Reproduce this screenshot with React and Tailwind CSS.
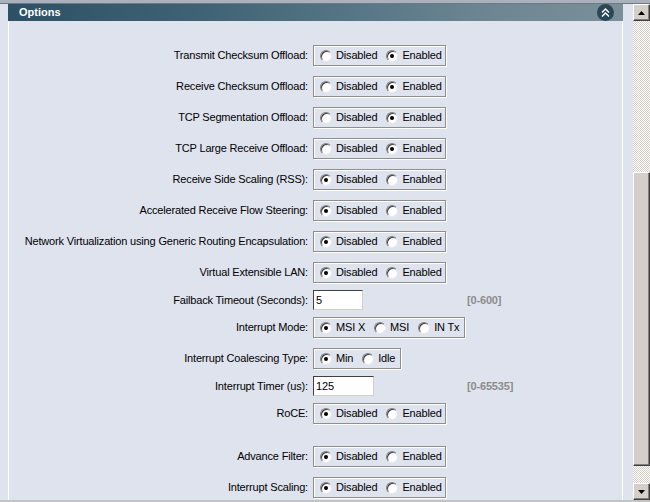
import React from "react";

const font = { fontFamily: '"Liberation Sans", Arial, sans-serif' };

const Radio = ({ checked }) => (
  <span className="relative inline-block w-[12px] h-[12px] rounded-full bg-white border border-t-[#808080] border-l-[#808080] border-b-[#e8e8e8] border-r-[#e8e8e8] shadow-[inset_1px_1px_0_#404040]">
    {checked && (
      <span className="absolute left-[3px] top-[3px] w-[4px] h-[4px] rounded-full bg-black" />
    )}
  </span>
);

const RadioBox = ({ options, value, width = "min-w-[132px]" }) => (
  <div
    className={`${width} h-[21px] flex items-center gap-[9px] pl-[6px] pr-[3px] border border-[#8e8e8e] shadow-[inset_1px_1px_0_#fff,1px_1px_0_#fff]`}
  >
    {options.map((o) => (
      <label key={o} className="flex items-center gap-[4px] whitespace-nowrap">
        <Radio checked={o === value} />
        <span>{o}</span>
      </label>
    ))}
  </div>
);

const TextBox = ({ value, width }) => (
  <div
    className={`${width} h-[20px] bg-white border border-t-[#404040] border-l-[#404040] border-b-[#d4d0c8] border-r-[#d4d0c8] flex items-center pl-[2px]`}
  >
    {value}
  </div>
);

const ED = ["Disabled", "Enabled"];

const rows = [
  { label: "Transmit Checksum Offload:", type: "radio", value: "Enabled" },
  { label: "Receive Checksum Offload:", type: "radio", value: "Enabled" },
  { label: "TCP Segmentation Offload:", type: "radio", value: "Enabled" },
  { label: "TCP Large Receive Offload:", type: "radio", value: "Enabled" },
  { label: "Receive Side Scaling (RSS):", type: "radio", value: "Disabled" },
  { label: "Accelerated Receive Flow Steering:", type: "radio", value: "Disabled" },
  {
    label: "Network Virtualization using Generic Routing Encapsulation:",
    type: "radio",
    value: "Disabled",
  },
  { label: "Virtual Extensible LAN:", type: "radio", value: "Disabled" },
  { label: "Failback Timeout (Seconds):", type: "text", value: "5", width: "w-[50px]", hint: "[0-600]" },
  {
    label: "Interrupt Mode:",
    type: "radio",
    options: ["MSI X", "MSI", "IN Tx"],
    value: "MSI X",
    width: "min-w-[152px]",
  },
  {
    label: "Interrupt Coalescing Type:",
    type: "radio",
    options: ["Min", "Idle"],
    value: "Min",
    width: "min-w-[88px]",
  },
  { label: "Interrupt Timer (us):", type: "text", value: "125", width: "w-[61px]", hint: "[0-65535]" },
  { label: "RoCE:", type: "radio", value: "Disabled" },
  { spacer: true },
  { label: "Advance Filter:", type: "radio", value: "Disabled" },
  { label: "Interrupt Scaling:", type: "radio", value: "Disabled" },
];

const CollapseIcon = () => (
  <svg width="17" height="17" viewBox="0 0 17 17">
    <circle cx="8.5" cy="8.5" r="8.5" fill="#2b4756" />
    <path d="M5 8.5 L8.5 5 L12 8.5 M5 12.5 L8.5 9 L12 12.5" stroke="#fff" strokeWidth="1.4" fill="none" />
  </svg>
);

const ScrollButton = ({ down }) => (
  <div className="h-[17px] w-[17px] bg-[#d4d0c8] border border-t-[#fff] border-l-[#fff] border-b-[#404040] border-r-[#404040] shadow-[inset_-1px_-1px_0_#808080] flex items-center justify-center">
    <svg width="7" height="4" viewBox="0 0 7 4">
      <path d={down ? "M0 0 H7 L3.5 4 Z" : "M0 4 H7 L3.5 0 Z"} fill="#000" />
    </svg>
  </div>
);

const App = () => {
  return (
    <div
      className="w-[650px] h-[502px] bg-[#dfe3ee] flex flex-col overflow-hidden text-[11px] tracking-[-0.17px] text-black"
      style={font}
    >
      <div className="h-[4px] bg-[#aab1bd] border-b border-[#6f7a88]" />
      <div className="flex-1 flex min-h-0">
        <div className="w-[633px] flex flex-col">
          <div className="ml-[8px] w-[615px] h-[21px] flex items-center justify-between pl-[11px] pr-[9px] bg-[linear-gradient(100deg,#2d5164_0%,#3e6173_30%,#557585_55%,#6f8793_80%,#7a8f9a_100%)]">
            <span className="text-white font-bold text-[11px] tracking-normal">Options</span>
            <CollapseIcon />
          </div>
          <div className="ml-[8px] w-[615px] flex-1 border-l border-r border-white pt-[19px]">
            {rows.map((r, i) =>
              r.spacer ? (
                <div key={i} className="h-[12px]" />
              ) : (
                <div
                  key={i}
                  className={`flex items-center ${r.type === "text" ? "h-[24px]" : "h-[31px]"}`}
                >
                  <div className="w-[299px] text-right whitespace-nowrap">{r.label}</div>
                  <div className="ml-[5px] flex items-center">
                    {r.type === "radio" ? (
                      <RadioBox options={r.options || ED} value={r.value} width={r.width} />
                    ) : (
                      <>
                        <div className="w-[154px]">
                          <TextBox value={r.value} width={r.width} />
                        </div>
                        <span className="font-bold text-[#8c8c8c]">{r.hint}</span>
                      </>
                    )}
                  </div>
                </div>
              )
            )}
          </div>
        </div>
        <div className="w-[17px] flex flex-col bg-[repeating-conic-gradient(#d4d0c8_0_25%,#ffffff_0_50%)] bg-[length:2px_2px]">
          <ScrollButton />
          <div className="h-[151px]" />
          <div className="h-[294px] bg-[#d4d0c8] border border-t-[#fff] border-l-[#fff] border-b-[#404040] border-r-[#404040] shadow-[inset_-1px_-1px_0_#808080]" />
          <div className="flex-1" />
          <ScrollButton down />
        </div>
      </div>
      <div className="h-[2px] bg-[#c4c4c4]" />
    </div>
  );
};

export default App;
